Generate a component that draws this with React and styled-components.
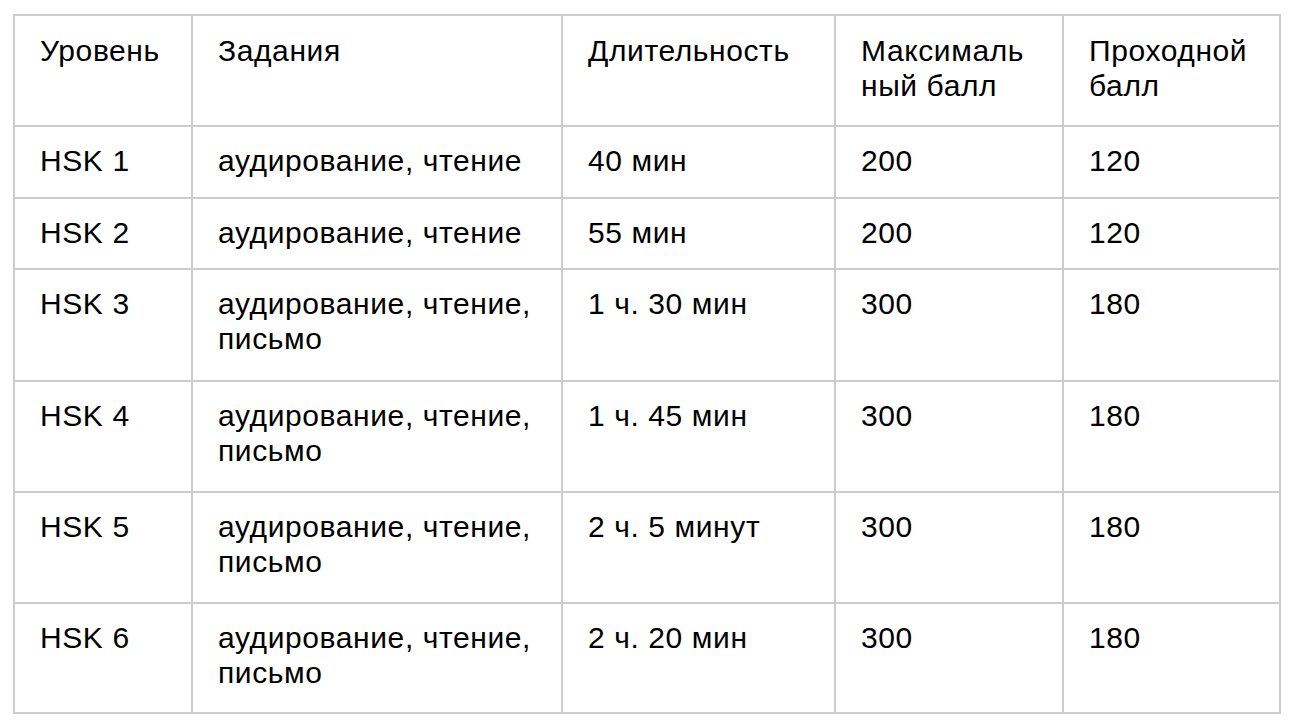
import React from "react";
import styled, { createGlobalStyle } from "styled-components";

const GlobalStyle = createGlobalStyle`
  html, body {
    margin: 0;
    padding: 0;
    background: #ffffff;
  }
  body {
    font-family: "Liberation Sans", Arial, sans-serif;
    color: #000000;
  }
`;

const columns = [178, 370, 273, 228, 217];

const head = [
  ["Уровень"],
  ["Задания"],
  ["Длительность"],
  ["Максималь", "ный балл"],
  ["Проходной", "балл"],
];

const rows = [
  { h: 72, cells: [["HSK 1"], ["аудирование, чтение"], ["40 мин"], ["200"], ["120"]] },
  { h: 71, cells: [["HSK 2"], ["аудирование, чтение"], ["55 мин"], ["200"], ["120"]] },
  { h: 112, cells: [["HSK 3"], ["аудирование, чтение,", "письмо"], ["1 ч. 30 мин"], ["300"], ["180"]] },
  { h: 111, cells: [["HSK 4"], ["аудирование, чтение,", "письмо"], ["1 ч. 45 мин"], ["300"], ["180"]] },
  { h: 111, cells: [["HSK 5"], ["аудирование, чтение,", "письмо"], ["2 ч. 5 минут"], ["300"], ["180"]] },
  { h: 110, cells: [["HSK 6"], ["аудирование, чтение,", "письмо"], ["2 ч. 20 мин"], ["300"], ["180"]] },
];

const Lines = ({ lines }) =>
  lines.map((line, i) => (
    <React.Fragment key={i}>
      {i > 0 && <br />}
      {line}
    </React.Fragment>
  ));

const App = () => {
  return (
    <Page>
      <GlobalStyle />
      <Table>
        <colgroup>
          {columns.map((w, i) => (
            <col key={i} style={{ width: w }} />
          ))}
        </colgroup>
        <thead>
          <Row $height={111}>
            {head.map((c, i) => (
              <HeadCell key={i}>
                <Lines lines={c} />
              </HeadCell>
            ))}
          </Row>
        </thead>
        <tbody>
          {rows.map((r, ri) => (
            <Row key={ri} $height={r.h}>
              {r.cells.map((c, ci) => (
                <Cell key={ci}>
                  <Lines lines={c} />
                </Cell>
              ))}
            </Row>
          ))}
        </tbody>
      </Table>
    </Page>
  );
};

export default App;

const Page = styled.div`
  padding: 14px 0 0 13px;
`;

const Table = styled.table`
  border-collapse: separate;
  border-spacing: 0;
  table-layout: fixed;
  width: 1268px;
  border-top: 2px solid #cccccc;
  border-left: 2px solid #cccccc;
  font-size: 30px;
  line-height: 35px;
  letter-spacing: 0.6px;
`;

const Row = styled.tr`
  height: ${(p) => p.$height}px;
`;

const Cell = styled.td`
  box-sizing: border-box;
  vertical-align: top;
  padding: 16px 10px 0 25px;
  border-right: 2px solid #cccccc;
  border-bottom: 2px solid #cccccc;
  white-space: nowrap;
  font-weight: 400;
  text-align: left;
`;

const HeadCell = styled(Cell).attrs({ as: "th" })`
  padding-top: 17px;
`;
